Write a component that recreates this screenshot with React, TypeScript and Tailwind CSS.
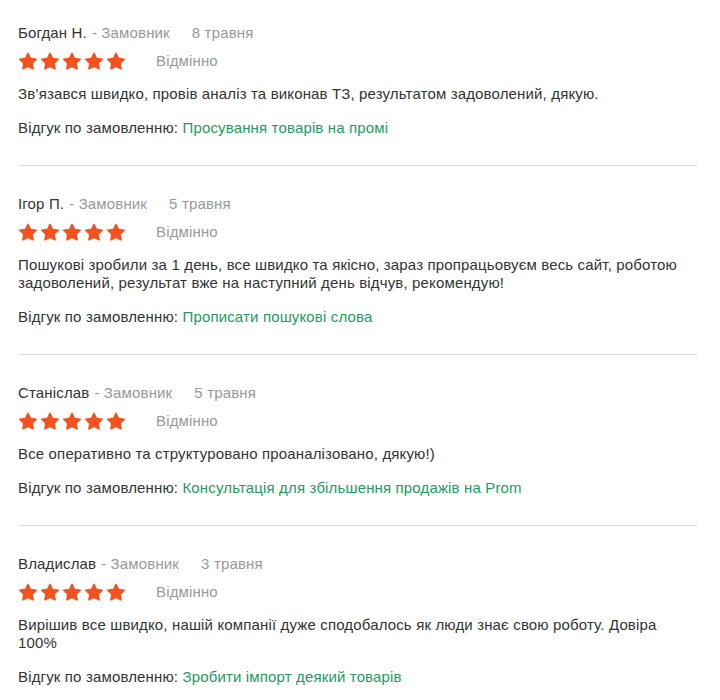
const reviews = [
  {
    name: "Богдан Н.",
    date: "8 травня",
    text: "Зв’язався швидко, провів аналіз та виконав ТЗ, результатом задоволений, дякую.",
    order: "Просування товарів на промі",
  },
  {
    name: "Ігор П.",
    date: "5 травня",
    text: "Пошукові зробили за 1 день, все швидко та якісно, зараз пропрацьовуєм весь сайт, роботою задоволений, результат вже на наступний день відчув, рекомендую!",
    order: "Прописати пошукові слова",
  },
  {
    name: "Станіслав",
    date: "5 травня",
    text: "Все оперативно та структуровано проаналізовано, дякую!)",
    order: "Консультація для збільшення продажів на Prom",
  },
  {
    name: "Владислав",
    date: "3 травня",
    text: "Вирішив все швидко, нашій компанії дуже сподобалось як люди знає свою роботу. Довіра 100%",
    order: "Зробити імпорт деякий товарів",
  },
];

function Star() {
  return (
    <svg width="20" height="19" viewBox="0 0 24 23" className="block">
      <path
        d="M12 1.6l3.1 6.3 6.9.9-5 4.8 1.2 6.9L12 17.3l-6.2 3.2 1.2-6.9-5-4.8 6.9-.9z"
        fill="#f5511f"
        stroke="#f5511f"
        strokeWidth="1.8"
        strokeLinejoin="round"
      />
    </svg>
  );
}

export default function App() {
  return (
    <main
      className="min-h-[700px] bg-white px-[18px] pt-[23px] text-[15px] tracking-[0.15px] text-[#333]"
      style={{ fontFamily: '"Liberation Sans", Arial, sans-serif' }}
    >
      {reviews.map((r, i) => (
        <section
          key={r.name}
          className={
            i < reviews.length - 1
              ? "border-b border-[#dcdcdc] pb-[28px] mb-[28px] mr-[4px]"
              : "pb-4 mr-[4px]"
          }
        >
          <div className="flex items-center leading-[20px]">
            <span>{r.name}</span>
            <span className="ml-[5px] text-[#999]">- Замовник</span>
            <span className="ml-[22px] text-[#999]">{r.date}</span>
          </div>
          <div className="mt-[8px] flex h-[20px] items-center">
            <div className="flex gap-[2px]">
              <Star />
              <Star />
              <Star />
              <Star />
              <Star />
            </div>
            <span className="ml-[30px] text-[#999]">Відмінно</span>
          </div>
          <p className="mt-[14px] leading-[18px]">{r.text}</p>
          <p className="mt-[15px] leading-[19px]">
            Відгук по замовленню:{" "}
            <a href="#" className="text-[#249a62]">
              {r.order}
            </a>
          </p>
        </section>
      ))}
    </main>
  );
}
